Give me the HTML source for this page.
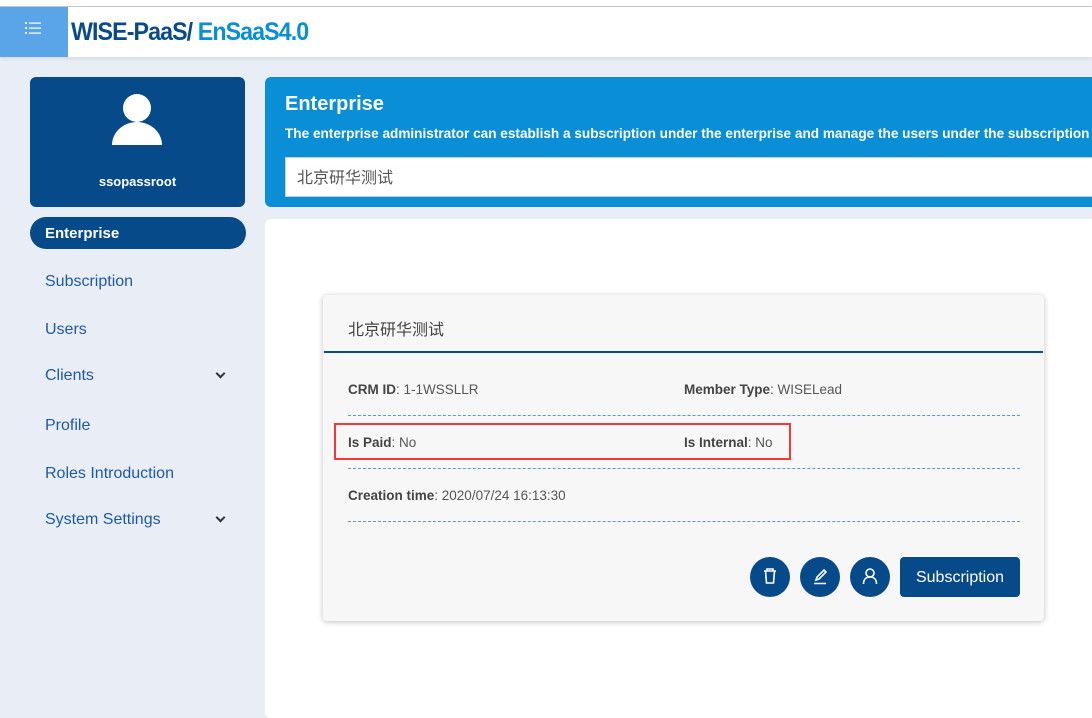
<!DOCTYPE html>
<html><head><meta charset="utf-8"><style>
*{box-sizing:border-box;margin:0;padding:0}
body{width:1092px;height:718px;overflow:hidden;background:#e9eef6;font-family:"Liberation Sans","Noto Sans CJK SC",sans-serif;position:relative}
.abs{position:absolute}
.topline{left:0;top:0;width:1092px;height:7px;background:#fff;border-bottom:1px solid #c8c8c8}
.header{left:0;top:7px;width:1092px;height:50px;background:#fff;box-shadow:0 2px 4px rgba(0,0,0,.08)}
.menu{left:0;top:7px;width:68px;height:50px;background:#5aa5e8}
.logo{left:71px;top:18px;font-size:25px;font-weight:bold;letter-spacing:-1px;white-space:nowrap;transform:scaleX(.93);transform-origin:left}
.side{left:30px;top:77px;width:215px;height:130px;background:#074a8a;border-radius:6px}
.pill{left:30px;top:217px;width:216px;height:32px;background:#074a8a;border-radius:16px;color:#fff;font-weight:bold;font-size:15px;line-height:34px;padding-left:15px}
.mi{left:45px;font-size:16px;color:#1f59a5}
.chev{left:217px;width:7px;height:7px;border-right:2px solid #333;border-bottom:2px solid #333;transform:rotate(45deg)}
.banner{left:265px;top:77px;width:840px;height:130px;background:#0a8ed6;border-radius:6px}
.panel{left:265px;top:219px;width:840px;height:499px;background:#fff;border-radius:6px}
.card{left:323px;top:295px;width:721px;height:326px;background:#f7f7f7;border-radius:4px;box-shadow:0 1px 6px rgba(0,0,0,.25)}
.lbl{font-size:13.5px;color:#555}
.lbl b{color:#444}
.dash{left:348px;width:672px;border-top:1px dashed #5b95d6}
.circ{width:40px;height:40px;border-radius:20px;background:#074a8a;top:557px}
</style></head><body>
<div class="abs topline"></div>
<div class="abs header"></div>
<div class="abs menu">
 <svg class="abs" style="left:25px;top:14px" width="18" height="14" viewBox="0 0 18 14"><g fill="#fff"><rect x="0" y="1" width="2" height="2"/><rect x="0" y="6" width="2" height="2"/><rect x="0" y="11" width="2" height="2"/><rect x="4" y="1.5" width="12" height="1.2"/><rect x="4" y="6.5" width="12" height="1.2"/><rect x="4" y="11.5" width="12" height="1.2"/></g></svg>
</div>
<div class="abs logo"><span style="color:#0b4a8a">WISE-PaaS/</span> <span style="color:#0a8ed6">EnSaaS4.0</span></div>

<div class="abs side">
 <svg class="abs" style="left:81px;top:16px" width="52" height="52" viewBox="0 0 52 52"><circle cx="26" cy="15" r="14" fill="#fff"/><path d="M1 52 A25 23 0 0 1 51 52 Z" fill="#fff"/></svg>
 <div class="abs" style="left:0;width:215px;top:97px;text-align:center;color:#fff;font-weight:bold;font-size:13px">ssopassroot</div>
</div>
<div class="abs pill">Enterprise</div>
<div class="abs mi" style="top:273px">Subscription</div>
<div class="abs mi" style="top:321px">Users</div>
<div class="abs mi" style="top:367px">Clients</div>
<div class="abs chev" style="top:370px"></div>
<div class="abs mi" style="top:417px">Profile</div>
<div class="abs mi" style="top:465px">Roles Introduction</div>
<div class="abs mi" style="top:511px">System Settings</div>
<div class="abs chev" style="top:514px"></div>

<div class="abs banner">
 <div class="abs" style="left:20px;top:16px;color:#fff;font-size:20px;font-weight:bold">Enterprise</div>
 <div class="abs" style="left:20px;top:49px;color:#fff;font-size:13.6px;font-weight:bold;white-space:nowrap">The enterprise administrator can establish a subscription under the enterprise and manage the users under the subscription</div>
 <div class="abs" style="left:20px;top:80px;width:820px;height:40px;background:#fff;border:1px solid #ccc;font-size:16px;color:#555;line-height:42px;padding-left:11px">北京研华测试</div>
</div>
<div class="abs panel"></div>

<div class="abs card">
 <div class="abs" style="left:25px;top:21px;font-size:16px;color:#444">北京研华测试</div>
 <div class="abs" style="left:1px;top:56px;width:719px;height:2px;background:#074a8a"></div>
</div>
<div class="abs lbl" style="left:348px;top:382px"><b>CRM ID</b>: 1-1WSSLLR</div>
<div class="abs lbl" style="left:684px;top:382px"><b>Member Type</b>: WISELead</div>
<div class="abs dash" style="top:415px"></div>
<div class="abs lbl" style="left:348px;top:435px"><b>Is Paid</b>: No</div>
<div class="abs lbl" style="left:684px;top:435px"><b>Is Internal</b>: No</div>
<div class="abs" style="left:334px;top:423px;width:457px;height:37px;border:2px solid #f03a3a"></div>
<div class="abs dash" style="top:468px"></div>
<div class="abs lbl" style="left:348px;top:488px"><b>Creation time</b>: 2020/07/24 16:13:30</div>
<div class="abs dash" style="top:521px"></div>

<div class="abs circ" style="left:750px"><svg width="40" height="40" viewBox="0 0 40 40" fill="none" stroke="#fff" stroke-width="1.6"><path d="M14 14h12M17 14v-2h6v2M15.5 14l1 12h7l1-12"/></svg></div>
<div class="abs circ" style="left:800px"><svg width="40" height="40" viewBox="0 0 40 40" fill="none" stroke="#fff" stroke-width="1.6"><path d="M16 23l1-3 7-7 2 2-7 7z M14 26.5h12"/></svg></div>
<div class="abs circ" style="left:850px"><svg width="40" height="40" viewBox="0 0 40 40" fill="none" stroke="#fff" stroke-width="1.6"><circle cx="20" cy="16" r="4"/><path d="M13.5 27c0-5 3-7 6.5-7s6.5 2 6.5 7"/></svg></div>
<div class="abs" style="left:900px;top:557px;width:120px;height:40px;background:#074a8a;border-radius:4px;color:#fff;font-size:16px;text-align:center;line-height:42px">Subscription</div>
</body></html>
